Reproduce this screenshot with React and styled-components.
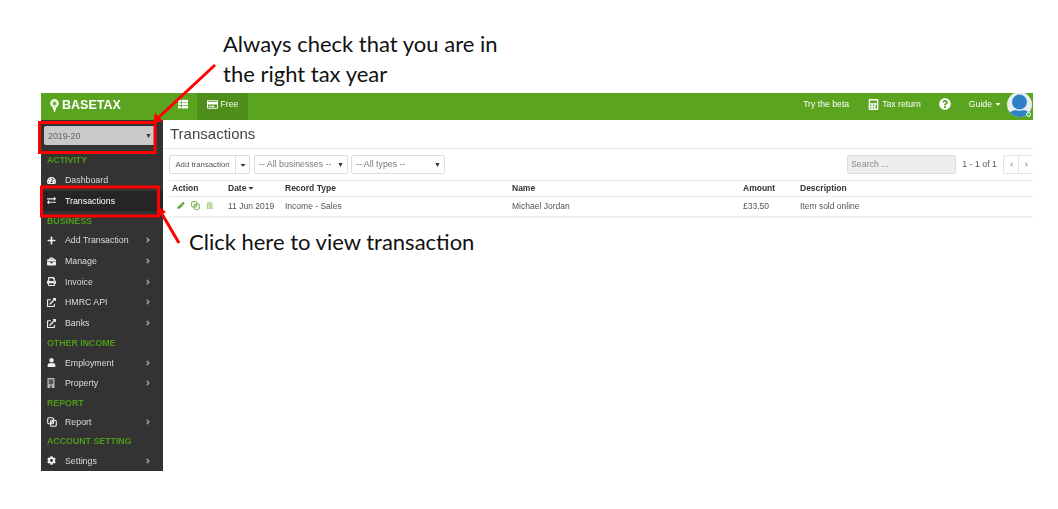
import React from "react";
import styled, { createGlobalStyle } from "styled-components";
import {
  FaTachometerAlt, FaExchangeAlt, FaPlus, FaBriefcase, FaPrint, FaExternalLinkAlt,
  FaUser, FaCog, FaPencilAlt, FaCalculator, FaTrashAlt,
  FaQuestionCircle, FaRegCreditCard, FaThList, FaAngleRight, FaAngleLeft, FaCaretDown,
} from "react-icons/fa";

const Global = createGlobalStyle`
  html, body { margin: 0; padding: 0; background: #fff; }
  body { font-family: "Liberation Sans", Arial, sans-serif; color: #333; }
`;

const Page = styled.div`
  position: relative;
  width: 1058px;
  height: 509px;
  overflow: hidden;
  padding: 0 25px 38px 41px;
  box-sizing: border-box;
`;
const TopNote = styled.div`
  height: 93px;
  box-sizing: border-box;
  padding: 29px 0 0 182px;
  font: 400 22px/30px Lato, "Open Sans", sans-serif;
  color: #111;
`;
const SideNote = styled.div`
  position: absolute;
  left: 189px;
  top: 227px;
  font: 400 22px/30px Lato, "Open Sans", sans-serif;
  color: #111;
`;
const Overlay = styled.svg`
  position: absolute;
  inset: 0;
  pointer-events: none;
`;
const Frame = styled.div`
  height: 378px;
  display: flex;
  flex-direction: column;
  overflow: hidden;
  filter: blur(0.3px);
`;
const TopBar = styled.header`
  height: 27px;
  flex: none;
  background: #5ba41f;
  display: flex;
  align-items: stretch;
  color: #fff;
  font-size: 8.7px;
`;
const Brand = styled.div`
  width: 128px;
  padding: 0 0 3px 9px;
  box-sizing: border-box;
  display: flex;
  align-items: center;
  gap: 3px;
  font-size: 12.5px;
  font-weight: 700;
`;
const ListBtn = styled.div`
  width: 28px;
  padding-bottom: 5px;
  box-sizing: border-box;
  display: flex;
  align-items: center;
  justify-content: center;
  font-size: 10px;
`;
const Tab = styled.div`
  width: 51px;
  display: flex;
  align-items: center;
  justify-content: center;
  gap: 3px;
  background: #4e8f1b;
  font-size: 8.7px;
  padding-bottom: 5px;
  box-sizing: border-box;
`;
const Spacer = styled.div`
  flex: 1;
`;
const NavItem = styled.div`
  display: flex;
  align-items: center;
  gap: ${(p) => p.$gap || 3}px;
  margin-right: ${(p) => p.$mr || 0}px;
  padding: 4px 0 9px;
  box-sizing: border-box;
  white-space: nowrap;
`;
const Avatar = styled.div`
  position: relative;
  width: 25px;
  height: 25px;
  align-self: flex-start;
  margin: -1px 1px 0 0;
  border-radius: 50%;
`;
const Online = styled.span`
  position: absolute;
  right: 1px;
  bottom: 0;
  width: 5px;
  height: 5px;
  border-radius: 50%;
  background: #2ecc55;
  border: 1px solid #fff;
  box-sizing: border-box;
`;
const Body = styled.div`
  flex: 1;
  display: flex;
  min-height: 0;
`;
const Sidebar = styled.aside`
  width: 122px;
  flex: none;
  background: #333;
  color: #ddd;
  font-size: 8.8px;
  overflow: hidden;
`;
const YearWrap = styled.div`
  height: 30px;
  padding: 6px 8px 0 3px;
  box-sizing: border-box;
`;
const YearSelect = styled.div`
  height: 19px;
  background: #c9c9c9;
  border-radius: 2px;
  display: flex;
  align-items: center;
  justify-content: space-between;
  padding: 0 3px 0 4px;
  font-size: 8.8px;
  color: #666;
`;
const Section = styled.div`
  height: ${(p) => p.$h || 19.5}px;
  padding-left: 6px;
  display: flex;
  align-items: center;
  color: #4f9a18;
  font-size: 8.8px;
  font-weight: 700;
`;
const Item = styled.div`
  height: ${(p) => p.$h || 20.7}px;
  display: flex;
  align-items: center;
  padding-left: 6px;
  background: ${(p) => (p.$active ? "#252525" : "transparent")};
  color: ${(p) => (p.$active ? "#fff" : "#ddd")};
`;
const ItemIcon = styled.span`
  width: 18px;
  display: flex;
  font-size: 9px;
  color: #eee;
`;
const ItemLabel = styled.span`
  flex: 1;
`;
const Chevron = styled.span`
  width: 19px;
  display: flex;
  font-size: 8px;
  color: #aaa;
`;
const Main = styled.main`
  flex: 1;
  background: #fff;
  min-width: 0;
  overflow: hidden;
`;
const TitleBar = styled.div`
  height: 29px;
  box-sizing: border-box;
  padding: 0 0 2px 7px;
  display: flex;
  align-items: center;
  font-size: 15px;
  color: #444;
  border-bottom: 1px solid #e8e8e8;
`;
const Toolbar = styled.div`
  height: 31px;
  box-sizing: border-box;
  padding: 6px 0 0 6px;
  display: flex;
  align-items: flex-start;
`;
const SplitButton = styled.div`
  height: 19px;
  width: 81px;
  box-sizing: border-box;
  border: 1px solid #ddd;
  border-radius: 2px;
  display: flex;
  font-size: 7.8px;
  color: #555;
  margin-right: 4px;
`;
const SplitLabel = styled.span`
  width: 65px;
  display: flex;
  align-items: center;
  justify-content: center;
  border-right: 1px solid #ddd;
  padding-bottom: 1px;
`;
const SplitCaret = styled.span`
  flex: 1;
  display: flex;
  align-items: center;
  justify-content: center;
  font-size: 8px;
  color: #333;
`;
const Filter = styled.div`
  height: 19px;
  width: ${(p) => p.$w}px;
  box-sizing: border-box;
  border: 1px solid #ddd;
  border-radius: 2px;
  padding: 0 3px 1px 4px;
  margin-right: 3px;
  display: flex;
  align-items: center;
  justify-content: space-between;
  font-size: 8.8px;
  color: #777;
`;
const Tri = styled.span`
  font-size: 7px;
  color: #333;
`;
const Search = styled.div`
  margin-left: auto;
  width: 109px;
  height: 19px;
  box-sizing: border-box;
  background: #eee;
  border: 1px solid #ddd;
  border-radius: 2px;
  padding: 0 0 1px 3px;
  display: flex;
  align-items: center;
  font-size: 8.8px;
  color: #888;
`;
const Count = styled.div`
  width: 41px;
  height: 18px;
  display: flex;
  align-items: center;
  justify-content: flex-end;
  font-size: 8.8px;
  color: #555;
  margin-right: 6px;
`;
const Pager = styled.div`
  width: 30px;
  height: 19px;
  box-sizing: border-box;
  flex: none;
  border: 1px solid #e4e4e4;
  border-right: 0;
  border-radius: 2px 0 0 2px;
  display: flex;
  color: #aaa;
  font-size: 7px;
`;
const PageBtn = styled.span`
  flex: 1;
  display: flex;
  align-items: center;
  justify-content: center;
  & + & { border-left: 1px solid #e4e4e4; }
`;
const Table = styled.div`
  margin-left: 6px;
  border-top: 1px solid #e8e8e8;
`;
const Row = styled.div`
  display: grid;
  grid-template-columns: 56px 57px 227px 231px 57px 1fr;
  align-items: center;
  height: ${(p) => p.$h}px;
  padding: 0 0 2px 3px;
  font-size: 8.5px;
  font-weight: ${(p) => (p.$head ? 700 : 400)};
  color: ${(p) => (p.$head ? "#333" : "#555")};
  border-bottom: ${(p) => (p.$head ? "1px solid #e8e8e8" : "2px solid #f0f0f0")};
  box-sizing: border-box;
`;
const Sort = styled.span`
  display: inline-flex;
  align-items: center;
  gap: 1px;
`;
const Actions = styled.span`
  display: flex;
  align-items: center;
  gap: 6px;
  padding-left: 5px;
  font-size: 7.5px;
`;
const ActionIcon = styled.span`
  display: flex;
  color: ${(p) => p.$c};
`;

const PinLogo = () => (
  <svg width="9" height="13" viewBox="0 0 9 13">
    <path d="M4.500.7a3.800 3.800 0 0 1 3.800 3.800c0 2-2.300 3-2.800 4.500L4.500 12.300 3.500 9C3 7.500.7 6.500.7 4.500A3.800 3.800 0 0 1 4.500.7z" fill="#d6ebc4" stroke="#fff" strokeWidth="1.200" />
    <circle cx="4.500" cy="4.500" r="1.500" fill="#5ba41f" />
  </svg>
);

const Overlap = ({ size = 9 }) => (
  <svg width={size} height={size} viewBox="0 0 10 10" fill="none" stroke="currentColor" strokeWidth="1.100">
    <rect x="0.700" y="0.700" width="5.800" height="6" rx="1.300" />
    <rect x="3.500" y="3.300" width="5.800" height="6" rx="1.300" />
    <path d="M3.500 6.500 6.500 3.300" />
  </svg>
);

const BuildingIcon = () => (
  <svg width="8" height="10" viewBox="0 0 8 10">
    <rect x="0.500" y="0" width="7" height="10" fill="#bbb" />
    <rect x="1.700" y="1.300" width="4.600" height="5" fill="#555" />
    <rect x="3" y="7.500" width="2" height="2.500" fill="#555" />
  </svg>
);

const AvatarArt = () => (
  <svg width="25" height="25" viewBox="0 0 25 25">
    <defs>
      <clipPath id="av"><circle cx="12.500" cy="12.500" r="12.500" /></clipPath>
    </defs>
    <g clipPath="url(#av)">
      <rect width="25" height="25" fill="#e9eef2" />
      <circle cx="12.500" cy="10" r="7.500" fill="#2f80c4" />
      <path d="M1 25c1-6 6-8 11.500-6 5.500-2 10.500 0 11.500 6z" fill="#2f80c4" />
    </g>
  </svg>
);

const Arrows = () => (
  <Overlay width="1058" height="509" viewBox="0 0 1058 509">
    <rect x="39.500" y="122.500" width="115.500" height="30" fill="none" stroke="#f00" strokeWidth="3" />
    <rect x="41.500" y="187" width="117" height="29" fill="none" stroke="#f00" strokeWidth="3" />
    <path d="M215 65 158 118" stroke="#f00" strokeWidth="3" fill="none" />
    <path d="M153 123 155 113 163 121z" fill="#f00" />
    <path d="M179 243 162 214" stroke="#f00" strokeWidth="3" fill="none" />
    <path d="M158 206 157 217 166 212z" fill="#f00" />
  </Overlay>
);

const menu = [
  { section: "ACTIVITY", h: 20 },
  { icon: <FaTachometerAlt />, label: "Dashboard", h: 20.5 },
  { icon: <FaExchangeAlt />, label: "Transactions", active: true, h: 20.5 },
  { section: "BUSINESS", h: 19 },
  { icon: <FaPlus />, label: "Add Transaction", more: true },
  { icon: <FaBriefcase />, label: "Manage", more: true },
  { icon: <FaPrint />, label: "Invoice", more: true },
  { icon: <FaExternalLinkAlt />, label: "HMRC API", more: true },
  { icon: <FaExternalLinkAlt />, label: "Banks", more: true },
  { section: "OTHER INCOME", h: 19.5 },
  { icon: <FaUser />, label: "Employment", more: true, h: 20 },
  { icon: <BuildingIcon />, label: "Property", more: true, h: 20.5 },
  { section: "REPORT", h: 18.5 },
  { icon: <Overlap size={10} />, label: "Report", more: true, h: 20 },
  { section: "ACCOUNT SETTING", h: 19 },
  { icon: <FaCog />, label: "Settings", more: true, h: 20 },
];

export default function App() {
  return (
    <>
      <Global />
      <Page>
        <TopNote>
          Always check that you are in
          <br />
          the right tax year
        </TopNote>
        <Frame>
          <TopBar>
            <Brand>
              <PinLogo />
              BASETAX
            </Brand>
            <ListBtn><FaThList /></ListBtn>
            <Tab><FaRegCreditCard size={11} />Free</Tab>
            <Spacer />
            <NavItem $mr={19}>Try the beta</NavItem>
            <NavItem $mr={18}><FaCalculator size={11} />Tax return</NavItem>
            <NavItem $mr={18}><FaQuestionCircle size={12} /></NavItem>
            <NavItem $mr={5} $gap={2}>Guide <FaCaretDown size={8} /></NavItem>
            <Avatar>
              <AvatarArt />
              <Online />
            </Avatar>
          </TopBar>
          <Body>
            <Sidebar>
              <YearWrap>
                <YearSelect>
                  2019-20
                  <Tri>▼</Tri>
                </YearSelect>
              </YearWrap>
              {menu.map((m, i) =>
                m.section ? (
                  <Section key={i} $h={m.h}>{m.section}</Section>
                ) : (
                  <Item key={i} $active={m.active} $h={m.h}>
                    <ItemIcon>{m.icon}</ItemIcon>
                    <ItemLabel>{m.label}</ItemLabel>
                    {m.more && <Chevron><FaAngleRight /></Chevron>}
                  </Item>
                )
              )}
            </Sidebar>
            <Main>
              <TitleBar>Transactions</TitleBar>
              <Toolbar>
                <SplitButton>
                  <SplitLabel>Add transaction</SplitLabel>
                  <SplitCaret><FaCaretDown /></SplitCaret>
                </SplitButton>
                <Filter $w={94}>-- All businesses --<Tri>▼</Tri></Filter>
                <Filter $w={94}>-- All types --<Tri>▼</Tri></Filter>
                <Search>Search ...</Search>
                <Count>1 - 1 of 1</Count>
                <Pager>
                  <PageBtn><FaAngleLeft /></PageBtn>
                  <PageBtn><FaAngleRight /></PageBtn>
                </Pager>
              </Toolbar>
              <Table>
                <Row $head $h={16}>
                  <span>Action</span>
                  <Sort>Date <FaCaretDown size={8} /></Sort>
                  <span>Record Type</span>
                  <span>Name</span>
                  <span>Amount</span>
                  <span>Description</span>
                </Row>
                <Row $h={21}>
                  <Actions>
                    <ActionIcon $c="#4f9a18"><FaPencilAlt /></ActionIcon>
                    <ActionIcon $c="#6fb04a"><Overlap size={9} /></ActionIcon>
                    <ActionIcon $c="#a9cf8f"><FaTrashAlt /></ActionIcon>
                  </Actions>
                  <span>11 Jun 2019</span>
                  <span>Income - Sales</span>
                  <span>Michael Jordan</span>
                  <span>£33.50</span>
                  <span>Item sold online</span>
                </Row>
              </Table>
            </Main>
          </Body>
        </Frame>
        <SideNote>Click here to view transaction</SideNote>
        <Arrows />
      </Page>
    </>
  );
}
